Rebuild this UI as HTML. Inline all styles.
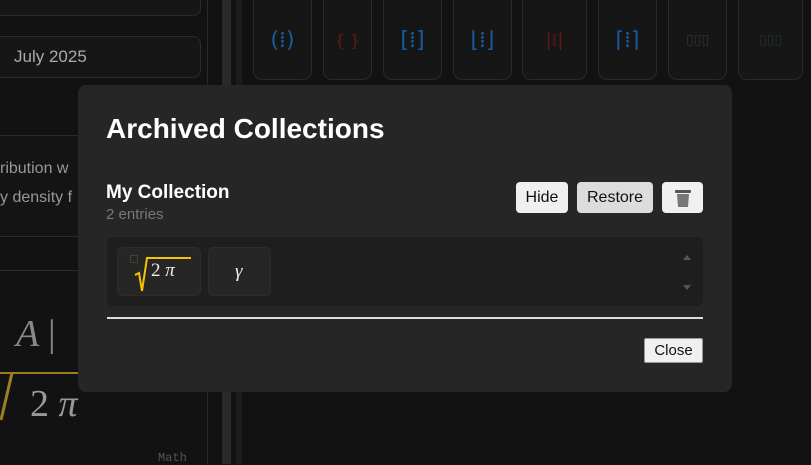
<!DOCTYPE html>
<html><head><style>
*{box-sizing:border-box;margin:0;padding:0}
body{width:811px;height:464px;background:#121212;position:relative;overflow:hidden;font-family:"Liberation Sans",sans-serif}
.a{position:absolute}
.box{position:absolute;border:1px solid #2c2c2c;border-radius:8px;background:#161616}
.card{position:absolute;top:-10px;height:90px;border:1px solid #2a2a2a;border-radius:9px;background:#161616;display:flex;align-items:center;justify-content:center;font-size:22px;font-family:"DejaVu Sans",sans-serif;padding-top:10px}
.btn{position:absolute;background:#f0f0f0;border-radius:4px;font-size:16px;color:#111;display:flex;align-items:center;justify-content:center}
.ent{position:absolute;top:10px;height:49px;border:1px solid #2c2c2c;border-radius:5px;background:#262626;color:#eee;font-family:"Liberation Serif",serif;font-style:italic;font-size:19px}
</style></head><body>
<div class="box" style="left:-10px;top:-20px;width:211px;height:36px"></div>
<div class="box" style="left:-10px;top:36px;width:211px;height:42px"></div>
<div class="a" style="left:14px;top:47px;color:#aaa;font-size:17px">July 2025</div>
<div class="a" style="left:0;top:135px;width:207px;height:102px;border-top:1px solid #2a2a2a;border-bottom:1px solid #2a2a2a;background:#141414"></div>
<div class="a" style="left:0;top:160px;color:#999;font-size:16px">ribution w</div>
<div class="a" style="left:0;top:189px;color:#999;font-size:16px">y density f</div>
<div class="a" style="left:0;top:270px;width:207px;border-top:1px solid #2a2a2a"></div>
<div class="a" style="left:16px;top:312px;color:#888;font-family:'Liberation Serif',serif;font-style:italic;font-size:38px">A <span style="font-style:normal">|</span></div>
<div class="a" style="left:0;top:372px;width:120px;border-top:2px solid #9a8020"></div>
<svg class="a" style="left:0;top:372px" width="20" height="60"><path d="M12 1 L1 48" stroke="#9a8020" stroke-width="3" fill="none"/></svg>
<div class="a" style="left:30px;top:382px;color:#999;font-family:'Liberation Serif',serif;font-size:38px">2 <i>π</i></div>
<div class="a" style="left:158px;top:451px;color:#555;font-family:'Liberation Mono',monospace;font-size:12px">Math</div>
<div class="a" style="left:207px;top:0;width:1px;height:464px;background:#2a2a2a"></div>
<div class="a" style="left:222px;top:0;width:9px;height:464px;background:#2a2a2a"></div>
<div class="a" style="left:236px;top:0;width:6px;height:464px;background:#1c1c1c"></div>
<div class="card" style="left:253px;width:59px;color:#1a5aa0">(⁞)</div>
<div class="card" style="left:323px;width:49px;color:#6a1515;font-size:16px">{ }</div>
<div class="card" style="left:383px;width:59px;color:#1a5aa0">[⁞]</div>
<div class="card" style="left:453px;width:59px;color:#1a5aa0">⌊⁞⌋</div>
<div class="card" style="left:522px;width:65px;color:#6a1515;font-size:18px">|⁞|</div>
<div class="card" style="left:598px;width:59px;color:#1a5aa0">⌈⁞⌉</div>
<div class="card" style="left:668px;width:59px;color:#333;font-size:14px">▯▯▯</div>
<div class="card" style="left:738px;width:65px;color:#253028;font-size:14px">▯▯▯</div>

<div class="a" style="left:78px;top:85px;width:654px;height:307px;background:#262626;border-radius:8px">
 <div class="a" style="left:28px;top:28px;color:#fff;font-weight:bold;font-size:28px">Archived Collections</div>
 <div class="a" style="left:28px;top:97px;color:#fff;font-weight:bold;font-size:19px">My Collection</div>
 <div class="a" style="left:28px;top:121px;color:#777;font-size:15px">2 entries</div>
 <div class="btn" style="left:438px;top:97px;width:52px;height:31px">Hide</div>
 <div class="btn" style="left:499px;top:97px;width:76px;height:31px;background:#dcdcdc">Restore</div>
 <div class="btn" style="left:584px;top:97px;width:41px;height:31px"><svg width="18" height="20"><rect x="1" y="2" width="16" height="3" rx="1" fill="#555"/><path d="M3 6 L15 6 L14 19 L4 19 Z" fill="#777"/></svg></div>
 <div class="a" style="left:29px;top:152px;width:596px;height:69px;background:#1e1e1e;border-radius:6px">
  <div class="ent" style="left:10px;width:84px"><span class="a" style="left:12px;top:7px;width:8px;height:8px;border:1px solid #4a4228"></span>
   <svg class="a" style="left:16px;top:9px" width="14" height="36"><path d="M1 18 L5 16 L8 34 L13 1" stroke="#f5c400" stroke-width="2" fill="none"/></svg>
   <div class="a" style="left:28px;top:9px;width:45px;border-top:2px solid #f5c400"></div>
   <span class="a" style="left:33px;top:12px;font-style:normal">2 <i>π</i></span></div>
  <div class="ent" style="left:101px;width:63px"><span class="a" style="left:26px;top:13px">γ</span></div>
  <div class="a" style="left:576px;top:14px;border:4px solid transparent;border-bottom:5px solid #555"></div>
  <div class="a" style="left:576px;top:48px;border:4px solid transparent;border-top:5px solid #555"></div>
 </div>
 <div class="a" style="left:29px;top:232px;width:596px;border-top:2px solid #ddd"></div>
 <div class="btn" style="left:566px;top:253px;width:59px;height:25px;border:1px solid #999;border-radius:2px;font-size:15px">Close</div>
</div>
</body></html>
